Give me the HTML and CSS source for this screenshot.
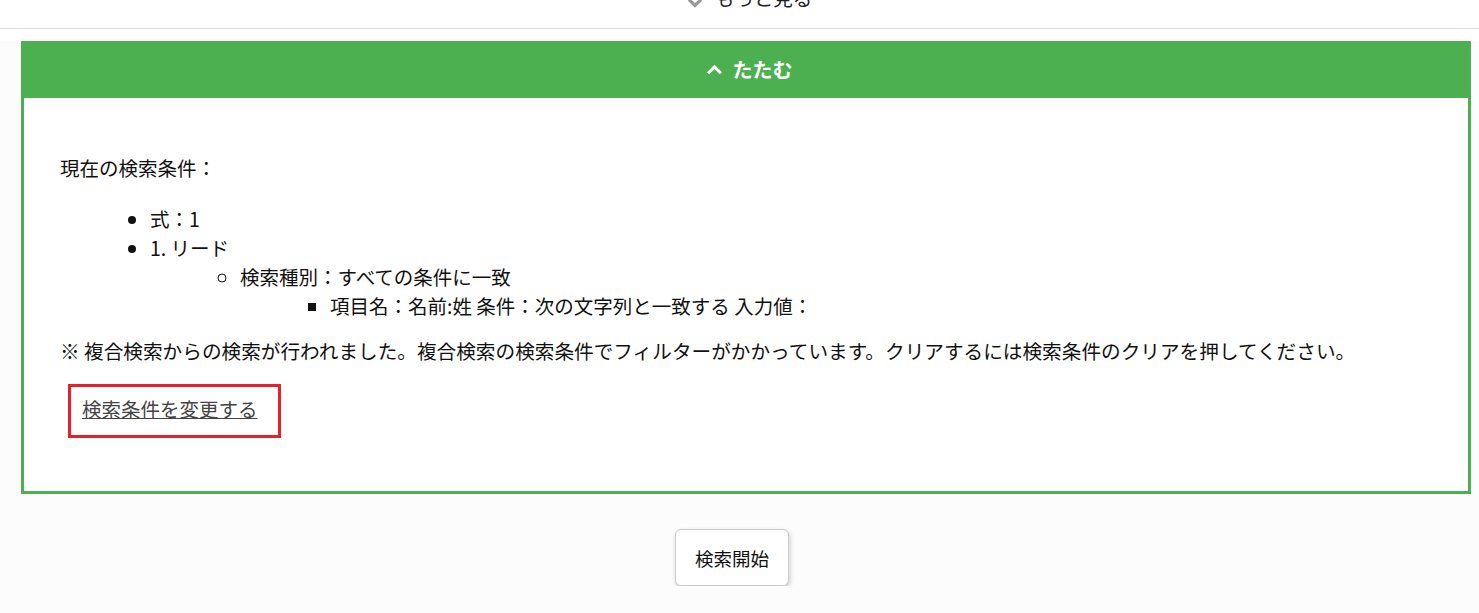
FILE: index.html
```html
<!DOCTYPE html>
<html lang="ja">
<head>
<meta charset="utf-8">
<title>検索条件</title>
<link rel="stylesheet" href="styles.css">
</head>
<body>
<div class="more-row">
  <a class="more-link" href="#">
    <svg class="more-icon" viewBox="0 0 16 11" width="16" height="11"><path d="M2 2.5 L8 8.5 L14 2.5" fill="none" stroke="#999" stroke-width="3.2"/></svg>
    <span>もっと見る</span>
  </a>
</div>
<hr class="divider">
<section class="panel">
  <header class="panel-head">
    <svg class="fold-icon" viewBox="0 0 16 10" width="17" height="11"><path d="M2 8.5 L8 2.5 L14 8.5" fill="none" stroke="#fff" stroke-width="2.8"/></svg>
    <span>たたむ</span>
  </header>
  <div class="panel-body">
    <p class="cond-title">現在の検索条件：</p>
    <ul class="lvl1">
      <li>式：1</li>
      <li>1. リード
        <ul class="lvl2">
          <li>検索種別：すべての条件に一致
            <ul class="lvl3">
              <li>項目名：名前:姓 条件：次の文字列と一致する 入力値：</li>
            </ul>
          </li>
        </ul>
      </li>
    </ul>
    <p class="note">※ 複合検索からの検索が行われました。複合検索の検索条件でフィルターがかかっています。クリアするには検索条件のクリアを押してください。</p>
    <div class="change-box"><a class="change-link" href="#">検索条件を変更する</a></div>
  </div>
</section>
<div class="actions">
  <button class="search-btn" type="button">検索開始</button>
</div>
</body>
</html>
```
FILE: styles.css
```css
html, body {
  margin: 0;
  padding: 0;
}
body {
  background: #fcfcfc;
  font-family: "Noto Sans CJK JP", "Noto Sans", sans-serif;
  color: #111;
  font-size: 19.5px;
  overflow: hidden;
}
.more-row {
  height: 28px;
  display: flex;
  justify-content: center;
  align-items: flex-start;
  background: #fff;
}
.more-link {
  display: flex;
  align-items: center;
  gap: 12px;
  color: #222;
  text-decoration: none;
  font-size: 19.5px;
  line-height: 26px;
  margin-left: 20px;
  margin-top: -15px;
}
.more-icon {
  align-self: flex-end;
  margin-bottom: 3px;
}
.divider {
  border: 0;
  border-top: 1px solid #dcdcdc;
  margin: 0;
  height: 12px;
  background: #fff;
}
.panel {
  margin: 0 8px 0 21px;
  border: 3px solid #4caf50;
  border-top: 0;
  background: #fff;
}
.panel-head {
  height: 57px;
  background: #4caf50;
  margin: 0 -3px;
  display: flex;
  align-items: center;
  justify-content: center;
  gap: 10px;
  color: #fff;
  font-weight: bold;
  font-size: 20px;
}
.fold-icon {
  margin-left: 6px;
}
.panel-body {
  padding: 56px 36px 53px;
}
.cond-title {
  margin: 0 0 22px;
  line-height: 28px;
}
ul {
  margin: 0;
  padding-left: 90px;
  line-height: 29px;
}
.lvl1 {
  list-style: disc;
}
.lvl2 {
  list-style: circle;
}
.lvl3 {
  list-style: square;
}
.note {
  margin: 16px 0 18px;
  line-height: 30px;
  font-size: 19.65px;
}
.change-box {
  display: inline-block;
  margin-left: 8px;
  border: 3px solid #e8202a;
  padding: 9px 20px 13px 11px;
  line-height: 26px;
}
.change-link {
  color: #444;
  text-decoration: underline;
}
.actions {
  display: flex;
  justify-content: center;
  padding-top: 35px;
}
.search-btn {
  font-family: "Noto Sans CJK JP", "Noto Sans", sans-serif;
  font-size: 18.5px;
  color: #111;
  background: #fff;
  border: 1px solid #ccc;
  border-radius: 6px;
  width: 114px;
  height: 57px;
  box-shadow: 1px 2px 5px rgba(0,0,0,0.2);
  margin-right: 15px;
}
```
